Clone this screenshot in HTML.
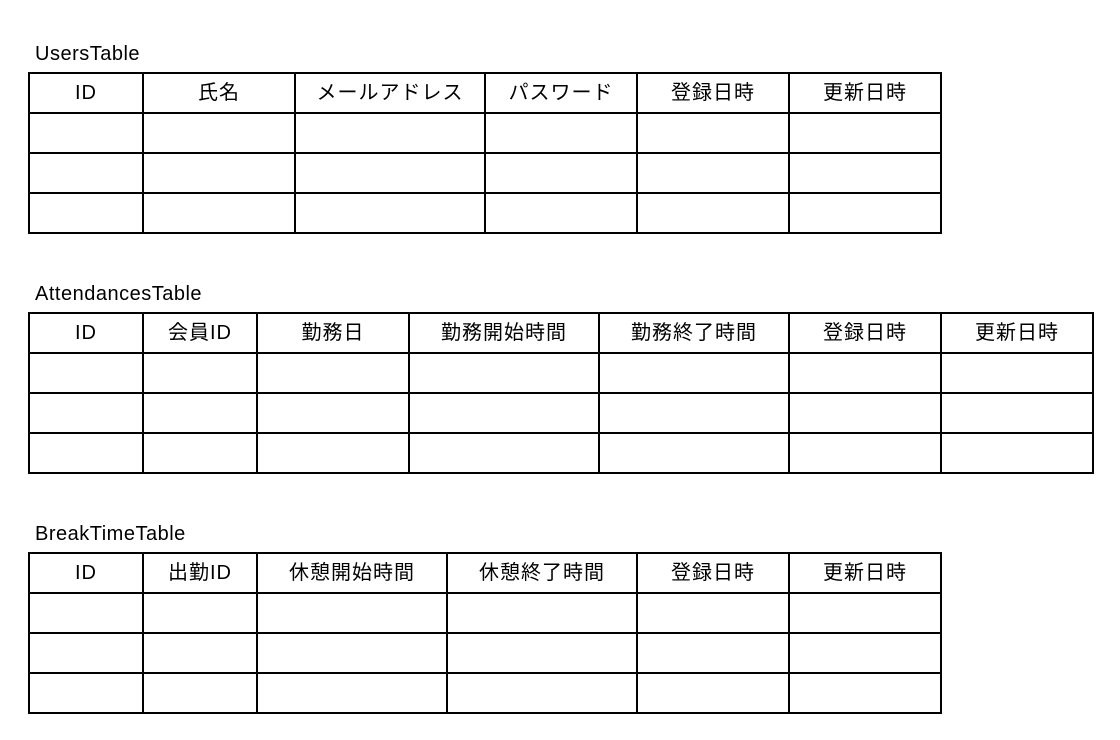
<!DOCTYPE html>
<html><head><meta charset="utf-8"><style>
body{margin:0;width:1120px;height:740px;background:#fff;position:relative;overflow:hidden;font-family:"Liberation Sans","Noto Sans CJK JP",sans-serif;color:#000}
.h,.v{position:absolute;background:#000}
.t{position:absolute;font-size:20px;line-height:40px;text-align:center;white-space:nowrap;letter-spacing:1px}
.title{position:absolute;font-size:20px;left:35px;white-space:nowrap;letter-spacing:.5px}
</style></head><body>
<script>
const r=document.body;
function tbl(title,top,cols,heads){
 const d=document.createElement('div');d.className='title';d.style.top=(top-30)+'px';d.textContent=title;r.appendChild(d);
 const x0=cols[0],x1=cols[cols.length-1];
 for(let i=0;i<5;i++){const h=document.createElement('div');h.className='h';h.style.cssText=`left:${x0-1}px;top:${top+i*40-1}px;width:${x1-x0+2}px;height:2px`;r.appendChild(h);}
 cols.forEach(x=>{const v=document.createElement('div');v.className='v';v.style.cssText=`left:${x-1}px;top:${top-1}px;width:2px;height:162px`;r.appendChild(v);});
 heads.forEach((s,i)=>{const t=document.createElement('div');t.className='t';t.style.cssText=`left:${cols[i]}px;width:${cols[i+1]-cols[i]}px;top:${top}px`;t.textContent=s;r.appendChild(t);});
}
tbl('UsersTable',73,[29,143,295,485,637,789,941],['ID','氏名','メールアドレス','パスワード','登録日時','更新日時']);
tbl('AttendancesTable',313,[29,143,257,409,599,789,941,1093],['ID','会員ID','勤務日','勤務開始時間','勤務終了時間','登録日時','更新日時']);
tbl('BreakTimeTable',553,[29,143,257,447,637,789,941],['ID','出勤ID','休憩開始時間','休憩終了時間','登録日時','更新日時']);
</script>
</body></html>
